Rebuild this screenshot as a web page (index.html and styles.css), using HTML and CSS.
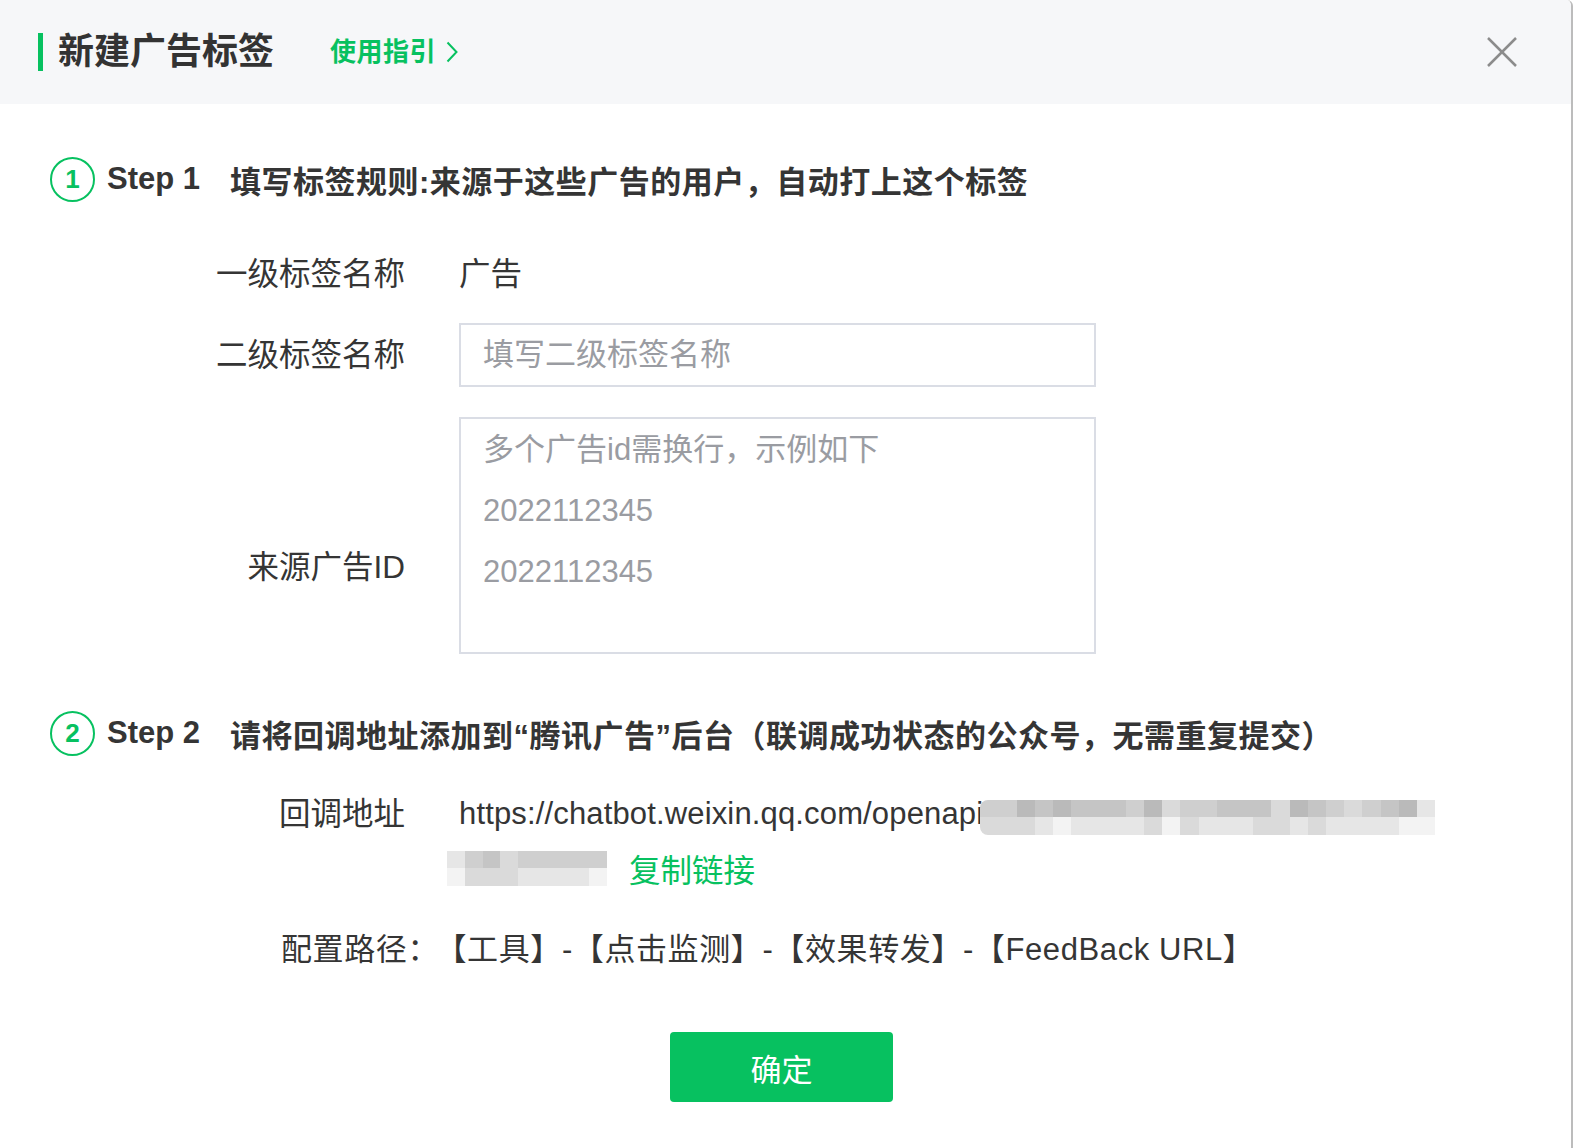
FILE: index.html
```html
<!DOCTYPE html>
<html lang="zh-CN">
<head>
  <meta charset="UTF-8" />
  <title>新建广告标签</title>
  <link rel="stylesheet" href="styles.css">
</head>
<body>
  <div class="dialog">
    <div class="header">
      <div class="header-left">
        <span class="bar"></span>
        <h1 class="title">新建广告标签</h1>
        <a class="guide" href="#">使用指引
          <svg class="chevron" width="12" height="22" viewBox="0 0 12 22"><polyline points="1.5,1.5 10.5,11 1.5,20.5" fill="none" stroke="#07c160" stroke-width="2"/></svg>
        </a>
      </div>
      <svg class="close" width="30" height="30" viewBox="0 0 30 30">
        <line x1="1" y1="1" x2="29" y2="29" stroke="#8c8c8c" stroke-width="2.5"/>
        <line x1="29" y1="1" x2="1" y2="29" stroke="#8c8c8c" stroke-width="2.5"/>
      </svg>
    </div>

    <div class="content">
      <div class="step step-one">
        <span class="step-num">1</span>
        <span class="step-label">Step 1</span>
        <span class="step-text">填写标签规则:来源于这些广告的用户，自动打上这个标签</span>
      </div>

      <div class="field field-first">
        <label class="field-label">一级标签名称</label>
        <div class="field-value">广告</div>
      </div>

      <div class="field field-input">
        <label class="field-label" for="sub">二级标签名称</label>
        <input class="text-input" id="sub" type="text" placeholder="填写二级标签名称">
      </div>

      <div class="field field-area">
        <label class="field-label area-label" for="ids">来源广告ID</label>
        <textarea class="text-area" id="ids" placeholder="多个广告id需换行，示例如下&#10;2022112345&#10;2022112345"></textarea>
      </div>

      <div class="step step-two">
        <span class="step-num">2</span>
        <span class="step-label">Step 2</span>
        <span class="step-text">请将回调地址添加到“腾讯广告”后台（联调成功状态的公众号，无需重复提交）</span>
      </div>

      <div class="field field-url">
        <label class="field-label url-label">回调地址</label>
        <div class="url-value">
          <div class="url-line">
            <span class="url-text">https://chatbot.weixin.qq.com/openapi</span>
            <div class="mosaic mosaic-long">
              <span class="s4"></span><span class="s4"></span><span class="s6"></span><span class="s5"></span><span class="s6"></span><span class="s5"></span><span class="s5"></span><span class="s5"></span><span class="s4"></span><span class="s6"></span><span class="s3"></span><span class="s4"></span><span class="s4"></span><span class="s5"></span><span class="s5"></span><span class="s5"></span><span class="s3"></span><span class="s6"></span><span class="s5"></span><span class="s4"></span><span class="s3"></span><span class="s4"></span><span class="s5"></span><span class="s6"></span><span class="s2"></span>
              <span class="s3"></span><span class="s3"></span><span class="s3"></span><span class="s2"></span><span class="s1"></span><span class="s2"></span><span class="s2"></span><span class="s2"></span><span class="s2"></span><span class="s3"></span><span class="s1"></span><span class="s3"></span><span class="s2"></span><span class="s2"></span><span class="s2"></span><span class="s3"></span><span class="s3"></span><span class="s2"></span><span class="s3"></span><span class="s2"></span><span class="s2"></span><span class="s2"></span><span class="s2"></span><span class="s1"></span><span class="s1"></span>
            </div>
          </div>
          <div class="url-line second">
            <div class="mosaic mosaic-short">
              <span class="s2"></span><span class="s4"></span><span class="s5"></span><span class="s3"></span><span class="s4"></span><span class="s4"></span><span class="s4"></span><span class="s4"></span><span class="s4"></span>
              <span class="s1"></span><span class="s3"></span><span class="s3"></span><span class="s3"></span><span class="s2"></span><span class="s2"></span><span class="s2"></span><span class="s2"></span><span class="s1"></span>
            </div>
            <a class="copy" href="#">复制链接</a>
          </div>
        </div>
      </div>

      <p class="path"><span class="path-label">配置路径：</span>【工具】-【点击监测】-【效果转发】-【FeedBack URL】</p>

      <div class="actions">
        <button class="confirm" type="button">确定</button>
      </div>
    </div>
  </div>
</body>
</html>
```

FILE: styles.css
```css
html, body {
  margin: 0;
  padding: 0;
  background: #fff;
}
body {
  font-family: "Liberation Sans", "Noto Sans CJK SC", sans-serif;
  color: #353535;
}
.dialog {
  box-sizing: border-box;
  width: 100%;
  height: 100vh;
  border-right: 2px solid #bcbcbc;
  border-top-right-radius: 6px;
  overflow: hidden;
}
.header {
  height: 104px;
  background: #f6f7f9;
  display: flex;
  align-items: center;
  justify-content: space-between;
  padding: 0 54px 0 38px;
}
.header-left {
  display: flex;
  align-items: center;
}
.bar {
  width: 5px;
  height: 38px;
  background: #07c160;
  margin-right: 15px;
}
.title {
  margin: 0;
  font-size: 36px;
  line-height: 40px;
  font-weight: bold;
  color: #333;
}
.guide {
  margin-left: 56px;
  display: flex;
  align-items: center;
  font-size: 26px;
  line-height: 40px;
  font-weight: bold;
  letter-spacing: 0.5px;
  color: #07c160;
  text-decoration: none;
}
.chevron {
  margin-left: 10px;
}
.content {
  padding-top: 52px;
}
.step {
  display: flex;
  align-items: center;
  height: 46px;
  padding-left: 50px;
}
.step-two {
  margin-top: 56px;
}
.step-num {
  box-sizing: border-box;
  width: 45px;
  height: 45px;
  border: 2px solid #07c160;
  border-radius: 50%;
  display: flex;
  align-items: center;
  justify-content: center;
  color: #07c160;
  font-size: 26px;
  font-weight: bold;
}
.step-label {
  margin-left: 12px;
  margin-right: 30px;
  font-size: 31px;
  font-weight: bold;
}
.step-text {
  font-size: 31px;
  font-weight: bold;
  letter-spacing: 0.5px;
}
.field {
  display: grid;
  grid-template-columns: 405px auto;
  column-gap: 54px;
  align-items: center;
}
.field-label {
  text-align: right;
  font-size: 31.5px;
  line-height: 40px;
  color: #353535;
}
.field-value {
  font-size: 31.5px;
  line-height: 40px;
}
.field-first {
  margin-top: 52px;
}
.field-input {
  margin-top: 29px;
}
.field-area {
  margin-top: 30px;
  align-items: start;
}
.area-label {
  padding-top: 130px;
}
.text-input,
.text-area {
  box-sizing: border-box;
  width: 637px;
  border: 2px solid #dadde5;
  border-radius: 0;
  padding: 0 22px;
  font-family: "Liberation Sans", "Noto Sans CJK SC", sans-serif;
  font-size: 31px;
  color: #353535;
  outline: none;
  background: #fff;
}
.text-input {
  height: 64px;
}
.text-area {
  height: 237px;
  line-height: 61px;
  padding-top: 0;
  resize: none;
}
.text-input::placeholder,
.text-area::placeholder {
  color: #9a9ca2;
}
.field-url {
  margin-top: 31px;
  align-items: start;
}
.url-label {
  line-height: 54px;
}
.url-line {
  display: flex;
  align-items: center;
  height: 54px;
}
.url-text {
  font-size: 31px;
  letter-spacing: 0.15px;
  color: #353535;
  white-space: nowrap;
}
.mosaic {
  display: grid;
  grid-template-rows: 1fr 1fr;
}
.mosaic-long {
  grid-template-columns: repeat(25, 1fr);
  width: 455px;
  height: 35px;
  margin-left: -3px;
  margin-top: 6px;
  border-radius: 8px 0 0 8px;
  overflow: hidden;
}
.mosaic-short {
  grid-template-columns: repeat(9, 1fr);
  width: 160px;
  height: 35px;
  margin-left: -12px;
}
.s1 { background: #f3f3f3; }
.s2 { background: #e6e6e6; }
.s3 { background: #dadada; }
.s4 { background: #cfcfcf; }
.s5 { background: #c5c5c5; }
.s6 { background: #bababa; }
.copy {
  margin-left: 22px;
  font-size: 31.5px;
  color: #07c160;
  text-decoration: none;
}
.path {
  margin: 28px 0 0;
  padding-left: 281px;
  font-size: 31px;
  line-height: 54px;
  letter-spacing: 0.6px;
  color: #353535;
}
.path-label {
  margin-right: 12px;
}
.actions {
  margin-top: 55px;
  padding-left: 670px;
}
.confirm {
  width: 223px;
  height: 70px;
  border: none;
  border-radius: 4px;
  background: #07c160;
  color: #fff;
  font-family: "Liberation Sans", "Noto Sans CJK SC", sans-serif;
  font-size: 31px;
  cursor: pointer;
}
```
